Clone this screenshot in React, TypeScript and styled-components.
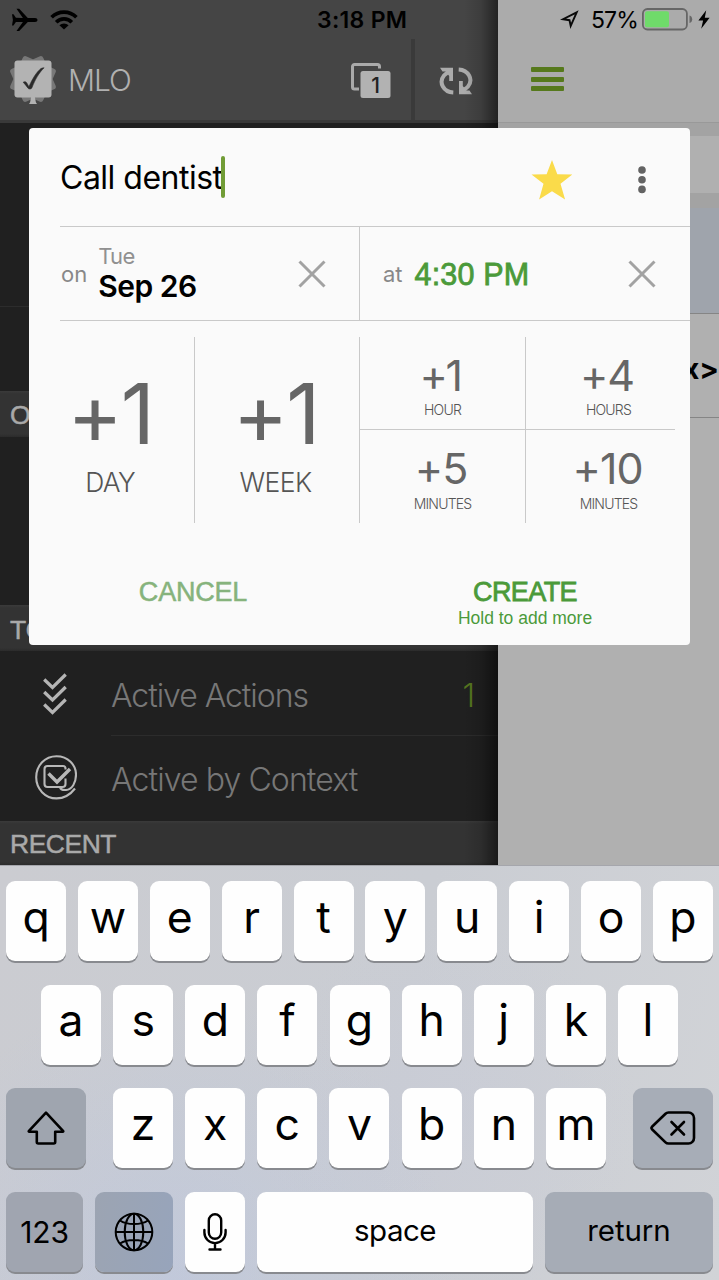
import React from "react";
import styled, { createGlobalStyle } from "styled-components";

const sans = `Inter, "Liberation Sans", sans-serif`;
const grotesk = `"Liberation Sans", Inter, sans-serif`;

const GlobalStyle = createGlobalStyle`
  body { margin: 0; background: #b0b0b0; font-family: ${sans}; }
  * { box-sizing: border-box; }
  button { border: 0; padding: 0; margin: 0; background: none; font: inherit; color: inherit; }
  svg { display: block; flex: none; }
`;

const Screen = styled.div`
  position: relative;
  width: 719px;
  height: 1280px;
  overflow: hidden;
  display: flex;
  flex-direction: column;
`;

const Label = styled.span<{
  $size: number;
  $weight?: number;
  $spacing?: number;
  $color?: string;
  $grotesk?: boolean;
  $stroke?: number;
}>`
  display: block;
  white-space: pre;
  line-height: 1;
  font-family: ${(p) => (p.$grotesk ? grotesk : sans)};
  font-size: ${(p) => p.$size}px;
  font-weight: ${(p) => p.$weight ?? 400};
  letter-spacing: ${(p) => p.$spacing ?? 0}px;
  color: ${(p) => p.$color ?? "#000"};
  -webkit-text-stroke: ${(p) => p.$stroke ?? 0}px ${(p) => p.$color ?? "#000"};
`;

/* ---------- Background app ---------- */

const Backdrop = styled.div`
  display: flex;
  height: 865px;
  flex: none;
`;

const Sidebar = styled.aside`
  position: relative;
  width: 498px;
  background: #202020;
  display: flex;
  flex-direction: column;
  overflow: hidden;
  &::after {
    content: "";
    position: absolute;
    inset: 0 0 0 auto;
    width: 34px;
    background: linear-gradient(90deg, rgba(0, 0, 0, 0), rgba(0, 0, 0, 0.12) 50%, rgba(0, 0, 0, 0.5));
  }
`;

const SidebarHeader = styled.header`
  height: 123px;
  background: #454545;
  border-bottom: 3px solid #393939;
  display: flex;
  flex-direction: column;
`;

const StatusLeft = styled.div`
  height: 39px;
  display: flex;
  align-items: center;
  gap: 12px;
  padding-left: 11px;
`;

const StatusTime = styled.div`
  margin: 2px 0 0 227px;
`;

const Toolbar = styled.div`
  flex: 1;
  display: flex;
  align-items: center;
  padding-left: 9px;
`;

const BrandSlot = styled.div`
  padding-top: 1px;
`;

const BrandName = styled.div`
  margin-left: 11px;
  padding-top: 1px;
  flex: 1;
`;

const ToolbarButton = styled.button<{ $width: number; $divided?: boolean }>`
  width: ${(p) => p.$width}px;
  height: 81px;
  padding: 2px ${(p) => (p.$divided ? 2 : 0)}px 0 0;
  display: flex;
  align-items: center;
  justify-content: center;
  border-left: ${(p) => (p.$divided ? "4px solid #3a3a3a" : "0")};
`;

const CountBadge = styled.div`
  position: relative;
  display: flex;
`;

const CountText = styled.div`
  position: absolute;
  left: 10px;
  top: 9px;
  width: 30px;
  height: 26px;
  display: flex;
  align-items: center;
  justify-content: center;
`;

const SectionHeader = styled.div<{ $height: number }>`
  height: ${(p) => p.$height}px;
  background: linear-gradient(#3a3a3a 0, #333 3px, #333 calc(100% - 3px), #2b2b2b);
  padding: 3px 0 0 10px;
  display: flex;
  align-items: center;
`;

const NavGap = styled.div<{ $height: number; $line?: boolean }>`
  height: ${(p) => p.$height}px;
  border-bottom: ${(p) => (p.$line ? "1px solid #2c2c2c" : "0")};
`;

const NavRow = styled.div`
  height: 85px;
  display: flex;
`;

const NavIcon = styled.div<{ $up?: number }>`
  width: 111px;
  padding-bottom: ${(p) => p.$up ?? 0}px;
  display: flex;
  align-items: center;
  justify-content: center;
`;

const NavBody = styled.div<{ $line?: boolean }>`
  flex: 1;
  display: flex;
  align-items: center;
  justify-content: space-between;
  padding: ${(p) => (p.$line ? 5 : 3)}px 23px 0 0;
  border-bottom: ${(p) => (p.$line ? "1px solid #2c2c2c" : "0")};
`;

const Content = styled.main`
  flex: 1;
  background: #b0b0b0;
  overflow: hidden;
`;

const ContentHeader = styled.header`
  height: 123px;
  background: #ababab;
  border-bottom: 1px solid #999;
`;

const StatusRight = styled.div`
  height: 39px;
  display: flex;
  align-items: center;
  padding-left: 62px;
`;

const StatusPercent = styled.div`
  width: 46px;
  margin: 2px 5px 0 12px;
`;

const BoltSlot = styled.div`
  margin-left: 5px;
`;

const MenuBars = styled.div`
  width: 33px;
  height: 24px;
  margin: 28px 0 0 33px;
  display: flex;
  flex-direction: column;
  justify-content: space-between;
`;

const MenuBar = styled.i`
  height: 5px;
  border-radius: 1px;
  background: #56791c;
`;

const Band = styled.div<{ $height: number; $color: string; $line?: boolean }>`
  height: ${(p) => p.$height}px;
  background: ${(p) => p.$color};
  border-bottom: ${(p) => (p.$line ? "1px solid #858585" : "0")};
  display: flex;
  align-items: center;
  justify-content: flex-end;
`;

const RowTitle = styled.div`
  margin-top: 6px;
`;

/* ---------- Dialog ---------- */

const Dialog = styled.section`
  position: absolute;
  left: 29px;
  top: 128px;
  width: 661px;
  height: 517px;
  border-radius: 4px;
  background: #fafafa;
  overflow: hidden;
  display: flex;
  flex-direction: column;
  padding-left: 31px;
`;

const rule = "1px solid #c9c9c9";

const TitleRow = styled.div`
  height: 99px;
  display: flex;
  align-items: center;
  border-bottom: ${rule};
`;

const TitleField = styled.div`
  flex: 1;
  display: flex;
  align-items: center;
`;

const TitleText = styled.div`
  padding-top: 2px;
`;

const Caret = styled.i`
  width: 4px;
  height: 42px;
  margin-left: -2px;
  border-radius: 2px;
  background: #719c36;
`;

const StarSlot = styled.div`
  margin: 6px 65px 0 0;
`;

const DotsSlot = styled.div`
  margin: 5px 44px 0 0;
`;

const WhenRow = styled.div`
  height: 94px;
  display: flex;
  border-bottom: ${rule};
`;

const WhenCell = styled.div<{ $width: number; $line?: boolean; $left: number; $right: number }>`
  width: ${(p) => p.$width}px;
  display: flex;
  align-items: center;
  padding: 1px ${(p) => p.$right}px 0 ${(p) => p.$left}px;
  border-right: ${(p) => (p.$line ? rule : "0")};
`;

const DateStack = styled.div`
  flex: 1;
  margin-left: 11px;
  padding-bottom: 2px;
  display: flex;
  flex-direction: column;
  gap: 4px;
`;

const TimeSlot = styled.div`
  flex: 1;
  margin-left: 12px;
  padding-top: 1px;
`;

const StepGrid = styled.div`
  height: 186px;
  margin: 16px 15px 0 -31px;
  display: grid;
  grid-template-columns: 166px 165px 166px 149px;
  grid-template-rows: 93px 93px;
`;

const BigStep = styled.button`
  grid-row: span 2;
  border-right: ${rule};
  display: flex;
  flex-direction: column;
  align-items: center;
  padding: 35px 3px 0 0;
  gap: 13px;
`;

const SmallStep = styled.button<{ $side?: boolean; $under?: boolean; $last?: boolean }>`
  border-right: ${(p) => (p.$side ? rule : "0")};
  border-bottom: ${(p) => (p.$under ? rule : "0")};
  display: flex;
  flex-direction: column;
  align-items: center;
  padding: 17px 0 0 ${(p) => (p.$last ? 16 : 0)}px;
  gap: ${(p) => (p.$under ? 6 : 7)}px;
`;

const StepValue = styled.div<{ $shift?: number }>`
  padding-right: ${(p) => p.$shift ?? 0}px;
`;

const Actions = styled.div`
  flex: 1;
  display: flex;
  padding-top: 56px;
`;

const Action = styled.button<{ $width: number; $offset?: number }>`
  width: ${(p) => p.$width}px;
  flex: none;
  margin-left: ${(p) => p.$offset ?? 0}px;
  display: flex;
  flex-direction: column;
  align-items: center;
  gap: 4px;
`;

/* ---------- Keyboard ---------- */

const Keyboard = styled.div`
  height: 415px;
  padding: 15px 6px 7px;
  border-top: 1px solid #a5a6ac;
  display: flex;
  flex-direction: column;
  justify-content: space-between;
  background:
    radial-gradient(circle at 24% 100%, rgba(180, 195, 230, 0.4), rgba(180, 195, 230, 0) 42%),
    radial-gradient(circle at 62% 60%, rgba(198, 201, 220, 0.3), rgba(198, 201, 220, 0) 38%),
    linear-gradient(100deg, #cbccd1 0%, #cacdd3 55%, #d1d3d7 100%);
`;

const KeyRow = styled.div<{ $inset?: number }>`
  height: 81px;
  padding: 0 ${(p) => p.$inset ?? 0}px;
  display: flex;
  justify-content: space-between;
`;

const KeyCluster = styled.div`
  width: 493px;
  display: flex;
  justify-content: space-between;
`;

const Key = styled.button<{ $width?: number; $fill?: string; $lift?: number }>`
  width: ${(p) => p.$width ?? 60}px;
  height: 80px;
  border-radius: 9px;
  background: ${(p) => p.$fill ?? "#fefefe"};
  box-shadow: 0 2px 0 #888a8f;
  display: flex;
  align-items: center;
  justify-content: center;
  padding-bottom: ${(p) => p.$lift ?? 0}px;
`;

const rows = ["qwertyuiop", "asdfghjkl", "zxcvbnm"];

const LetterKey = ({ char }: { char: string }) => (
  <Key $lift={8}>
    <Label $size={44.5}>{char}</Label>
  </Key>
);

/* ---------- Icons ---------- */

const Airplane = () => (
  <svg width="27" height="24" viewBox="0 0 27 24">
    <path
      d="M1 6.200h1.500l2.400 3.600 7 .1L5.500.8h2.700l8.600 9.100h7.200c1.500 0 2.500.9 2.500 2s-1 2-2.500 2h-7.200l-8.600 9.100H5.500l6.400-9.100-7 .1L2.500 17.600H1l.9-5.700z"
      fill="#000"
    />
  </svg>
);

const Wifi = () => (
  <svg width="28" height="20" viewBox="0 0 28 20" fill="none" stroke="#000" strokeWidth="3.700">
    <path d="M1.600 7.300a17.500 17.500 0 0 1 24.800 0" />
    <path d="M6.200 12.200a11 11 0 0 1 15.600 0" />
    <path d="M14 19.600l-4.600-4.300a6.500 6.500 0 0 1 9.200 0z" fill="#000" stroke="none" />
  </svg>
);

const Brand = () => (
  <svg width="48" height="50" viewBox="0 0 48 50">
    <g fill="#787878">
      <rect x="6" y="6" width="36" height="36" rx="3" transform="rotate(24 24 24)" />
      <rect x="6" y="6" width="36" height="36" rx="3" transform="rotate(-24 24 24)" />
    </g>
    <rect x="5.500" y="5.500" width="37" height="37" rx="3" fill="#b3b3b3" />
    <path d="M22.300 41h3.400l1.200 6.200 1.100 1.900h-8l1.100-1.900z" fill="#b3b3b3" />
    <path d="M14.200 27.200c2-.8 3-.4 3.900 1.200l1.800 3.400c3.600-8.300 7.500-14.500 12-18.200 1-.6 2-.8 3.200-.8-5.400 5.300-8.800 11.400-12.300 20.200-.7 1.300-3 1.300-3.800.2-1.600-2.200-3-4.100-4.800-6z" fill="#2a2a2a" stroke="#2a2a2a" strokeWidth="0.600" />
  </svg>
);

const Windows = () => (
  <svg width="40" height="35" viewBox="0 0 40 35">
    <path d="M8 26H3.500a2 2 0 0 1-2-2V3.500a2 2 0 0 1 2-2H26.500a2 2 0 0 1 2 2V5.500" fill="none" stroke="#aaa" strokeWidth="3" />
    <rect x="9.500" y="8" width="30" height="27" rx="2.500" fill="#b2b2b2" />
  </svg>
);

const SyncArrow = () => (
  <>
    <path d="M14.300 25.500C4.600 25 -.7 15.500 5 8.500C6.500 6.800 8 6 10 4.500" fill="none" stroke="#ababab" strokeWidth="4" />
    <path d="M1 .8h13v13.200h-3.800V9L6.500 4.600H3.500z" fill="#ababab" />
  </>
);

const Sync = () => (
  <svg width="34" height="28" viewBox="0 0 34 28">
    <SyncArrow />
    <g transform="rotate(180 17 14)">
      <SyncArrow />
    </g>
  </svg>
);

const Chevrons = () => (
  <svg width="25" height="42" viewBox="0 0 25 42" fill="none" stroke="#b5b5b5" strokeWidth="3.200">
    <path d="M1.200 6.500l8.300 8L22.700 1.500M1.200 19l8.300 8L22.700 14M1.200 31.500l8.300 8L22.700 26.500" />
  </svg>
);

const ContextIcon = () => (
  <svg width="42" height="45" viewBox="0 0 42 45" fill="none" stroke="#b8b8b8" strokeWidth="2.100">
    <path d="M40 33.500C35 40 28.500 43.400 21.500 43.400 10 43.400 1.200 33.800 1.200 22.300 1.200 10.500 10 1.200 21.500 1.200 33 1.200 41 10 41 19.500 41 28 37 34.500 31 35 27.500 35.200 25.300 34 25 32" />
    <path d="M30.500 14.500V13.500a2.500 2.500 0 0 0-2.500-2.500H12.500a3 3 0 0 0-3 3V29a3 3 0 0 0 3 3H27.500a3 3 0 0 0 3-3V23.500" />
    <path d="M13.500 18.500l8.500 8.500L35 14" strokeWidth="3.400" />
  </svg>
);

const Location = () => (
  <svg width="19" height="20" viewBox="0 0 19 20" fill="none" stroke="#0a0a0a" strokeWidth="1.900">
    <path d="M16.700 2.300L10.700 16 9.500 10.200 3 9.200z" />
  </svg>
);

const Battery = () => (
  <svg width="51" height="23" viewBox="0 0 51 23">
    <rect x="0.900" y="1" width="44" height="20.500" rx="4.500" fill="none" stroke="#666" strokeWidth="1.800" />
    <rect x="3" y="3.200" width="24" height="16" rx="2" fill="#6fdb6a" />
    <path d="M47.500 7.500c1.700.4 2.700 1.900 2.700 3.700s-1 3.300-2.700 3.700z" fill="#666" />
  </svg>
);

const Bolt = () => (
  <svg width="12" height="19" viewBox="0 0 12 19">
    <path d="M8.200.3L.4 10.600h4.700L3.200 18.700 11.600 7.800H6.800z" fill="#000" />
  </svg>
);

const Star = () => (
  <svg width="42" height="40" viewBox="0 0 42 40">
    <path d="M21 0l5.300 14.300 15 .3-11.800 9.200 4.600 15.700L21 31.300 8.100 39.500l4.400-15.700L.5 14.600l15.100-.3z" fill="#fadb4a" />
  </svg>
);

const Dots = () => (
  <svg width="8" height="28" viewBox="0 0 8 28" fill="#636363">
    <circle cx="4" cy="4" r="3.800" />
    <circle cx="4" cy="13.700" r="3.800" />
    <circle cx="4" cy="23.400" r="3.800" />
  </svg>
);

const Cross = () => (
  <svg width="28" height="28" viewBox="0 0 28 28" stroke="#a2a2a2" strokeWidth="3">
    <path d="M1.500 1.500l25 25M26.500 1.500l-25 25" />
  </svg>
);

const Shift = () => (
  <svg width="38" height="34" viewBox="0 0 38 34" fill="none" stroke="#000" strokeWidth="2.600" strokeLinejoin="round">
    <path d="M19 1.600L36 19.800c.5.600.3 1-.4 1H28.200v10.200c0 1-.6 1.500-1.500 1.500H11.300c-.9 0-1.500-.5-1.500-1.500V20.800H2.400c-.7 0-.9-.4-.4-1z" />
  </svg>
);

const Backspace = () => (
  <svg width="46" height="34" viewBox="0 0 46 34" fill="none" stroke="#000" strokeWidth="2.600" strokeLinejoin="round">
    <path d="M18.500 1.500H38.500a5.500 5.500 0 0 1 5.500 5.500V27a5.500 5.500 0 0 1-5.500 5.500H18.500c-1.300 0-2.200-.4-3-1.200L2 18.200c-.7-.8-.7-1.600 0-2.400L15.500 2.700c.8-.8 1.700-1.200 3-1.200z" />
    <path d="M21.500 11l12.500 12.500M34 11l-12.500 12.500" strokeLinecap="round" />
  </svg>
);

const Globe = () => (
  <svg width="40" height="40" viewBox="0 0 40 40" fill="none" stroke="#000" strokeWidth="2">
    <circle cx="20" cy="20" r="18.300" />
    <ellipse cx="20" cy="20" rx="9.300" ry="18.300" />
    <path d="M20 1.500v37M1.500 20h37M6 8.500c7 4.800 21 4.800 28 0M6 31.500c7-4.800 21-4.800 28 0" />
  </svg>
);

const Mic = () => (
  <svg width="24" height="38" viewBox="0 0 24 38" fill="none" stroke="#000" strokeWidth="2.400" strokeLinecap="round">
    <rect x="5.800" y="1.300" width="12.400" height="24.500" rx="6.200" />
    <path d="M1.400 17v2.500a10.600 10.600 0 0 0 21.200 0V17M12 30.200v6.300M6.500 36.500h11" />
  </svg>
);

/* ---------- Page ---------- */

const smallSteps = [
  { value: "+1", unit: "HOUR", spacing: -2.5, shift: 5 },
  { value: "+4", unit: "HOURS", spacing: -1, shift: 3 },
  { value: "+5", unit: "MINUTES", spacing: -1, shift: 3 },
  { value: "+10", unit: "MINUTES", spacing: -1, shift: 2 },
];

export default function App() {
  return (
    <Screen>
      <GlobalStyle />
      <Backdrop>
        <Sidebar>
          <SidebarHeader>
            <StatusLeft>
              <Airplane />
              <Wifi />
              <StatusTime>
                <Label $size={23} $weight={600} $spacing={0.3}>3:18 PM</Label>
              </StatusTime>
            </StatusLeft>
            <Toolbar>
              <BrandSlot><Brand /></BrandSlot>
              <BrandName>
                <Label $size={30} $weight={300} $color="#b0b0b0" $spacing={-1}>MLO</Label>
              </BrandName>
              <ToolbarButton $width={81}>
                <CountBadge>
                  <Windows />
                  <CountText>
                    <Label $size={21} $weight={500} $color="#222">1</Label>
                  </CountText>
                </CountBadge>
              </ToolbarButton>
              <ToolbarButton $width={87} $divided>
                <Sync />
              </ToolbarButton>
            </Toolbar>
          </SidebarHeader>
          <NavGap $height={184} $line />
          <NavGap $height={84} />
          <SectionHeader $height={46}>
            <Label $grotesk $size={26.5} $stroke={0.5} $color="#a9a9a9">O</Label>
          </SectionHeader>
          <NavGap $height={169} />
          <SectionHeader $height={46}>
            <Label $grotesk $size={26.5} $stroke={0.5} $color="#a9a9a9">TO</Label>
          </SectionHeader>
          <NavRow>
            <NavIcon><Chevrons /></NavIcon>
            <NavBody $line>
              <Label $size={32} $weight={300} $spacing={-1.05} $color="#777">Active Actions</Label>
              <Label $size={32} $weight={300} $color="#56751f">1</Label>
            </NavBody>
          </NavRow>
          <NavRow>
            <NavIcon $up={3}><ContextIcon /></NavIcon>
            <NavBody>
              <Label $size={32} $weight={300} $spacing={-0.9} $color="#777">Active by Context</Label>
            </NavBody>
          </NavRow>
          <SectionHeader $height={44}>
            <Label $grotesk $size={26.5} $stroke={0.5} $spacing={-0.5} $color="#a9a9a9">RECENT</Label>
          </SectionHeader>
        </Sidebar>
        <Content>
          <ContentHeader>
            <StatusRight>
              <Location />
              <StatusPercent><Label $size={23} $spacing={-0.9}>57%</Label></StatusPercent>
              <Battery />
              <BoltSlot><Bolt /></BoltSlot>
            </StatusRight>
            <MenuBars><MenuBar /><MenuBar /><MenuBar /></MenuBars>
          </ContentHeader>
          <Band $height={13} $color="#a3a3a3" />
          <Band $height={57} $color="#b0b0b0" />
          <Band $height={15} $color="#a3a3a3" />
          <Band $height={106} $color="#9fa4ac" $line />
          <Band $height={104} $color="#b0b0b0" $line>
            <RowTitle>
              <Label $size={29} $weight={700} $spacing={0}>x&gt;</Label>
            </RowTitle>
          </Band>
        </Content>
      </Backdrop>

      <Keyboard>
        <KeyRow>
          {[...rows[0]].map((c) => <LetterKey key={c} char={c} />)}
        </KeyRow>
        <KeyRow $inset={35}>
          {[...rows[1]].map((c) => <LetterKey key={c} char={c} />)}
        </KeyRow>
        <KeyRow>
          <Key $width={80} $fill="#9fa5af"><Shift /></Key>
          <KeyCluster>
            {[...rows[2]].map((c) => <LetterKey key={c} char={c} />)}
          </KeyCluster>
          <Key $width={80} $fill="#a7adb7"><Backspace /></Key>
        </KeyRow>
        <KeyRow>
          <Key $width={77} $fill="#a0a5b0"><Label $size={30} $spacing={-0.1}>123</Label></Key>
          <Key $width={78} $fill="linear-gradient(100deg, #9ca4b2, #97a4bb)"><Globe /></Key>
          <Key><Mic /></Key>
          <Key $width={276} $lift={2}><Label $size={29.5} $spacing={-0.5}>space</Label></Key>
          <Key $width={168} $fill="#a6acb6" $lift={2}><Label $size={29.5} $spacing={-0.1}>return</Label></Key>
        </KeyRow>
      </Keyboard>

      <Dialog>
        <TitleRow>
          <TitleField>
            <TitleText>
              <Label $size={32} $spacing={-0.5}>Call dentist</Label>
            </TitleText>
            <Caret />
          </TitleField>
          <StarSlot><Star /></StarSlot>
          <DotsSlot><Dots /></DotsSlot>
        </TitleRow>
        <WhenRow>
          <WhenCell $width={300} $left={1} $right={33} $line>
            <Label $size={22} $color="#888">on</Label>
            <DateStack>
              <Label $size={22} $color="#909090" $spacing={-0.7}>Tue</Label>
              <Label $size={30} $weight={600} $spacing={-0.5}>Sep 26</Label>
            </DateStack>
            <Cross />
          </WhenCell>
          <WhenCell $width={330} $left={23} $right={34}>
            <Label $size={22} $color="#888">at</Label>
            <TimeSlot>
              <Label $grotesk $size={30.5} $stroke={0.8} $spacing={0.15} $color="#4b9a3a">4:30 PM</Label>
            </TimeSlot>
            <Cross />
          </WhenCell>
        </WhenRow>
        <StepGrid>
          <BigStep>
            <Label $size={84} $spacing={-2} $color="#666">+1</Label>
            <Label $size={26.5} $weight={300} $spacing={-0.7} $color="#555">DAY</Label>
          </BigStep>
          <BigStep>
            <Label $size={84} $spacing={-2} $color="#666">+1</Label>
            <Label $size={26.5} $weight={300} $spacing={-0.6} $color="#555">WEEK</Label>
          </BigStep>
          {smallSteps.map((s, i) => (
            <SmallStep key={i} $side={i % 2 === 0} $under={i < 2} $last={i % 2 === 1}>
              <StepValue $shift={s.shift}>
                <Label $size={43} $spacing={s.spacing} $color="#666">{s.value}</Label>
              </StepValue>
              <Label $size={14} $weight={300} $spacing={-0.8} $color="#555">{s.unit}</Label>
            </SmallStep>
          ))}
        </StepGrid>
        <Actions>
          <Action $width={266}>
            <Label $grotesk $size={27} $stroke={0.5} $spacing={-0.2} $color="#86b37c">CANCEL</Label>
          </Action>
          <Action $width={330} $offset={34}>
            <Label $grotesk $size={27} $stroke={0.8} $spacing={-0.6} $color="#4b9a3a">CREATE</Label>
            <Label $grotesk $size={17.5} $color="#4b9a3a">Hold to add more</Label>
          </Action>
        </Actions>
      </Dialog>
    </Screen>
  );
}
